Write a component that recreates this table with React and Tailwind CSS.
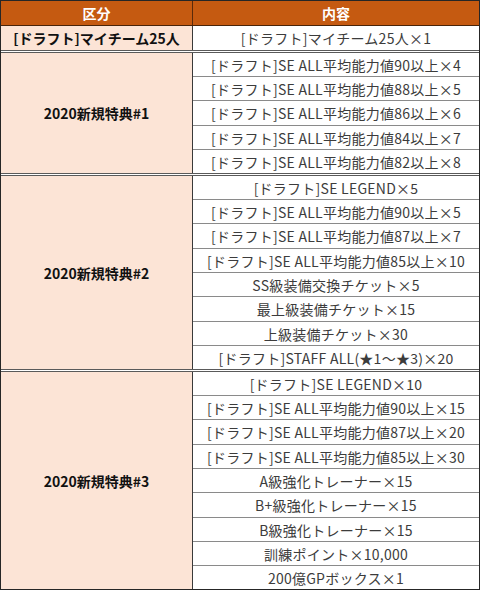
const groups = [
  {
    title: '2020新規特典#1',
    rows: [
      '[ドラフト]SE ALL平均能力値90以上×4',
      '[ドラフト]SE ALL平均能力値88以上×5',
      '[ドラフト]SE ALL平均能力値86以上×6',
      '[ドラフト]SE ALL平均能力値84以上×7',
      '[ドラフト]SE ALL平均能力値82以上×8',
    ],
    heights: ['h-[23px]', 'h-[24px]', 'h-[25px]', 'h-[24px]', 'h-[24px]'],
  },
  {
    title: '2020新規特典#2',
    rows: [
      '[ドラフト]SE LEGEND×5',
      '[ドラフト]SE ALL平均能力値90以上×5',
      '[ドラフト]SE ALL平均能力値87以上×7',
      '[ドラフト]SE ALL平均能力値85以上×10',
      'SS級装備交換チケット×5',
      '最上級装備チケット×15',
      '上級装備チケット×30',
      '[ドラフト]STAFF ALL(★1～★3)×20',
    ],
    heights: ['h-[23px]', 'h-[24px]', 'h-[25px]', 'h-[24px]', 'h-[24px]', 'h-[25px]', 'h-[24px]', 'h-[24px]'],
  },
  {
    title: '2020新規特典#3',
    rows: [
      '[ドラフト]SE LEGEND×10',
      '[ドラフト]SE ALL平均能力値90以上×15',
      '[ドラフト]SE ALL平均能力値87以上×20',
      '[ドラフト]SE ALL平均能力値85以上×30',
      'A級強化トレーナー×15',
      'B+級強化トレーナー×15',
      'B級強化トレーナー×15',
      '訓練ポイント×10,000',
      '200億GPボックス×1',
    ],
    heights: ['h-[23px]', 'h-[24px]', 'h-[25px]', 'h-[24px]', 'h-[24px]', 'h-[25px]', 'h-[24px]', 'h-[24px]', 'h-[24px]'],
  },
];

const Group = ({ group }) => (
  <div className="flex border-t-[3px] border-double border-[#5a5a5a]">
    <div className="w-[192px] shrink-0 bg-[#fce4d6] border-r border-[#3a3a3a] flex items-center justify-center font-bold text-[#111]">
      {group.title}
    </div>
    <div className="flex-1 flex flex-col bg-white">
      {group.rows.map((text, i) => (
        <div
          key={i}
          className={`${group.heights[i]} ${i > 0 ? 'border-t border-[#8a8a8a]' : ''} flex items-center justify-center text-[#3c3c3c] tracking-[0.25px] whitespace-nowrap`}
        >
          {text}
        </div>
      ))}
    </div>
  </div>
);

export default function App() {
  return (
    <div className="w-[480px] h-[590px] overflow-hidden border border-[#262626] bg-white text-[14px] leading-none font-['Noto_Sans_CJK_JP','Noto_Sans',sans-serif]">
      <div className="flex h-[25px] bg-[#c55a11] border-b border-[#4a2408] text-white font-bold">
        <div className="w-[192px] shrink-0 border-r border-[#5a2a0a] flex items-center justify-center">区分</div>
        <div className="flex-1 flex items-center justify-center">内容</div>
      </div>
      <div className="flex h-[24px]">
        <div className="w-[192px] shrink-0 bg-[#fce4d6] border-r border-[#3a3a3a] flex items-center justify-center font-bold text-[#111] whitespace-nowrap">
          [ドラフト]マイチーム25人
        </div>
        <div className="flex-1 flex items-center justify-center text-[#3c3c3c] tracking-[0.25px]">[ドラフト]マイチーム25人×1</div>
      </div>
      {groups.map((g) => (
        <Group key={g.title} group={g} />
      ))}
    </div>
  );
}
